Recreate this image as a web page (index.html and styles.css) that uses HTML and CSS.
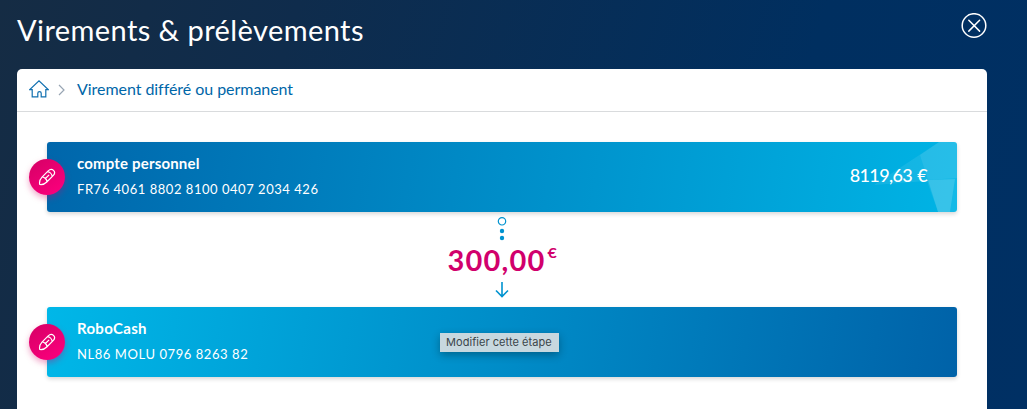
FILE: index.html
```html
<!DOCTYPE html>
<html lang="fr">
<head>
<meta charset="utf-8">
<title>Virements &amp; prélèvements</title>
<link rel="stylesheet" href="styles.css">
</head>
<body>
<header class="top">
  <h1 class="title">Virements &amp; prélèvements</h1>
  <button class="close" aria-label="Fermer"><svg width="26" height="26" viewBox="0 0 26 26"><circle cx="13" cy="12.500" r="11.800"/><path d="M7.800 7.300l10.800 10.800M18.600 7.300L7.800 18.100"/></svg></button>
</header>
<main class="panel">
  <nav class="crumbs">
    <svg class="home" width="20" height="18" viewBox="0 0 20 18"><path d="M3.2 9.600H.8L10 .9l9.2 8.700h-2.400v7.300h-4.600v-3.700c0-2-3.400-2-3.400 0v3.700H3.2z"/></svg>
    <svg class="chev" width="7" height="12" viewBox="0 0 7 12"><path d="M1 1l5 5-5 5"/></svg>
    <a class="crumb">Virement différé ou permanent</a>
  </nav>
  <div class="steps">
    <section class="card from">
      <svg class="facets" width="84" height="70" viewBox="0 0 84 70"><path d="M1 43L66 0h18v70H65L54 39z"/><path d="M47 13L66 0h18v36l-29 2z"/><path d="M55 38l27-1-5 33H65z"/><path d="M55 38l27-1-5 33H65z"/></svg>
      <button class="edit" aria-label="Modifier"><svg width="18" height="18" viewBox="0 0 18 18"><path d="M1.700 16.500c-.5-2.500.4-5.300 2.300-7.300l6.200-6.400c1.800-1.800 4-1.700 5.300-.4s1.400 3.500-.4 5.300l-6.300 6.300c-2 2-4.600 2.900-7.100 2.500zM4.500 9c2 .2 4.300 2.300 4.400 4.400M9.500 3.700c2.200.3 4.400 2.400 4.700 4.700M6.900 11l4.200-4.200"/></svg></button>
      <div class="info"><strong class="name">compte personnel</strong><span class="iban">FR76 4061 8802 8100 0407 2034 426</span></div>
      <span class="balance">8119,63 €</span>
    </section>
    <div class="transfer">
      <svg class="dots" width="10" height="26" viewBox="0 0 10 26"><circle class="ring" cx="5" cy="5.300" r="3.700"/><circle cx="5" cy="15" r="2.200"/><circle cx="5" cy="22" r="2.200"/></svg>
      <div class="amount"><span class="figure">300,00</span><sup class="euro">€</sup></div>
      <svg class="arrow" width="14" height="16" viewBox="0 0 14 16"><path d="M7 0v14M1 8.500l6 6 6-6"/></svg>
    </div>
    <section class="card to">
      <button class="edit" aria-label="Modifier"><svg width="18" height="18" viewBox="0 0 18 18"><path d="M1.700 16.500c-.5-2.500.4-5.300 2.300-7.300l6.200-6.400c1.800-1.800 4-1.700 5.300-.4s1.400 3.500-.4 5.300l-6.300 6.300c-2 2-4.600 2.900-7.100 2.500zM4.500 9c2 .2 4.300 2.300 4.400 4.400M9.500 3.700c2.200.3 4.400 2.400 4.700 4.700M6.900 11l4.200-4.200"/></svg></button>
      <div class="info"><strong class="name robo">RoboCash</strong><span class="iban nl">NL86 MOLU 0796 8263 82</span></div>
      <span class="tooltip">Modifier cette étape</span>
    </section>
  </div>
</main>
</body>
</html>
```
FILE: styles.css
```css
* { box-sizing: border-box; }
body {
  margin: 0;
  height: 409px;
  overflow: hidden;
  padding: 0 40px 0 17px;
  display: flex;
  flex-direction: column;
  font-family: Lato, "Open Sans", sans-serif;
  background: linear-gradient(107deg, #152c44 0%, #0f2c4c 26%, #002f60 72%, #003064 100%);
}
button { padding: 0; border: 0; background: none; display: block; }
svg { display: block; fill: none; flex: none; }
.top { height: 69px; flex: none; display: flex; justify-content: space-between; }
.title { margin: 11px 0 0; font-size: 29px; line-height: 38px; font-weight: 400; color: #fff; letter-spacing: .42px; }
.close { margin-top: 13px; height: 26px; }
.close svg { stroke: #fff; stroke-width: 1.5; stroke-linecap: round; }
.panel { flex: 1; background: #fff; border-radius: 5px 5px 0 0; }
.crumbs { height: 43px; padding: 0 12px; display: flex; align-items: center; border-bottom: 1px solid #d9dbdd; }
.home { stroke: #1170b0; stroke-width: 1.2; margin-top: -2px; }
.chev { stroke: #98a5b3; stroke-width: 1.2; margin: 0 12px 0 9px; }
.crumb { font-size: 16px; line-height: 20px; margin-top: -3px; color: #0066a8; letter-spacing: -.05px; white-space: nowrap; }
.steps { padding: 30px 30px 0; }
.card { position: relative; height: 70px; border-radius: 3px; display: flex; align-items: center; justify-content: space-between; padding: 0 30px; color: #fff; box-shadow: 0 2px 4px rgba(0,0,0,.16); }
.from { background: linear-gradient(98deg, #0066ab, #00b4e5); }
.to { background: linear-gradient(98deg, #00b7e8, #0062a8); }
.facets { position: absolute; right: 0; top: 0; border-radius: 0 3px 3px 0; }
.facets path { fill: rgba(255,255,255,.08); }
.edit { position: absolute; left: -18px; top: 17px; width: 36px; height: 36px; border-radius: 50%; display: grid; place-items: center; background: linear-gradient(145deg, #d50065, #ff007f); box-shadow: 0 3px 6px rgba(213,0,101,.35); }
.edit svg { stroke: #fff; stroke-width: 1.2; stroke-linejoin: round; }
.info { display: flex; flex-direction: column; gap: 8px; padding-bottom: 2px; }
.name { font-size: 15px; line-height: 18px; font-weight: 700; letter-spacing: .17px; }
.robo { letter-spacing: .3px; }
.iban { font-size: 13px; line-height: 18px; letter-spacing: .53px; }
.nl { letter-spacing: .57px; }
.balance { position: relative; font-size: 18px; font-weight: 500; letter-spacing: -.6px; word-spacing: 1px; padding-bottom: 4px; }
.transfer { height: 95px; padding-top: 4px; display: flex; flex-direction: column; align-items: center; color: #d1006c; }
.dots { fill: #0093d0; }
.ring { fill: none; stroke: #0093d0; stroke-width: 1.2; }
.amount { height: 40px; display: flex; }
.figure { font-size: 29px; line-height: 35px; font-weight: 700; letter-spacing: 1.2px; }
.euro { font-size: 14px; line-height: 18px; margin: 2px 0 0 3px; font-weight: 700; transform: scaleX(1.15); }
.arrow { stroke: #0093d0; stroke-width: 1.6; }
.tooltip { position: absolute; left: 393px; top: 26px; width: 119px; height: 19px; padding-left: 6px; font: 11px/18px Inter, sans-serif; letter-spacing: .05px; white-space: nowrap; color: #3b4549; background: #c8d8df; box-shadow: 0 3px 8px rgba(0,0,0,.3); }
```
